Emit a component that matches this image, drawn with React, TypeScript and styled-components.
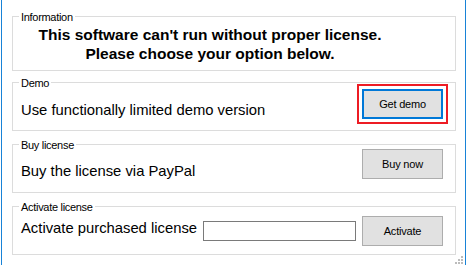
import React from 'react';
import styled, { createGlobalStyle, css } from 'styled-components';

const GlobalStyle = createGlobalStyle`
  html, body {
    margin: 0;
    padding: 0;
    background: #ffffff;
  }
  body {
    font-family: "Liberation Sans", Arial, sans-serif;
    color: #000000;
  }
`;

const Window = styled.div`
  position: relative;
  box-sizing: border-box;
  width: 465px;
  height: 265px;
  margin-left: 1px;
  padding: 16px 9px 0 10px;
  border-left: 1px solid #1883d7;
  border-right: 1px solid #1883d7;
  background: #ffffff;
`;

const Group = styled.div<{ $top?: number; $height?: number }>`
  position: relative;
  box-sizing: border-box;
  height: ${p => p.$height ?? 49}px;
  margin-top: ${p => p.$top ?? 0}px;
  border: 1px solid #dcdcdc;
`;

// caption sits over the group's top border, like a WinForms GroupBox
const Caption = styled.span`
  position: absolute;
  top: -6px;
  left: 6px;
  padding: 0 2px;
  background: #ffffff;
  font-size: 11px;
  line-height: 13px;
  letter-spacing: -0.3px;
  white-space: nowrap;
`;

const Heading = styled.p`
  margin: 0;
  padding: 8px 48px 0 0;
  font-size: 15.5px;
  line-height: 19px;
  font-weight: bold;
  text-align: center;
`;

const Row = styled.div`
  display: flex;
  align-items: flex-start;
  padding: 0 12px 0 8px;
`;

const Message = styled.span<{ $top: number }>`
  flex: 1;
  margin-top: ${p => p.$top}px;
  font-size: 14.8px;
  line-height: 17px;
  white-space: nowrap;
`;

const Controls = styled.div<{ $top: number }>`
  display: flex;
  align-items: center;
  gap: 5px;
  margin-top: ${p => p.$top}px;
`;

const Button = styled.button<{ $focused?: boolean }>`
  box-sizing: border-box;
  width: 81px;
  height: 30px;
  padding: 0;
  border: 1px solid #adadad;
  background: #e1e1e1;
  font-family: "Liberation Sans", Arial, sans-serif;
  font-size: 11px;
  letter-spacing: -0.2px;
  color: #000000;
  ${p =>
    p.$focused &&
    css`
      border: 2px solid #0078d7;
      outline: 2px solid #ed1c24;
      outline-offset: 3px;
    `}
`;

const TextBox = styled.input`
  box-sizing: border-box;
  width: 153px;
  height: 20px;
  margin: 0 1px 0 0;
  padding: 0 3px;
  border: 1px solid #7a7a7a;
  background: #ffffff;
  font-family: "Liberation Sans", Arial, sans-serif;
  font-size: 12px;
`;

const Grip = styled.svg`
  position: absolute;
  right: 1px;
  bottom: 0;
`;

const ResizeGrip = () => (
  <Grip width="9" height="10" viewBox="0 0 9 10">
    {[
      [6, 1],
      [3, 4],
      [6, 4],
      [0, 7],
      [3, 7],
      [6, 7],
    ].map(([x, y]) => (
      <rect key={`${x}-${y}`} x={x} y={y} width="2" height="2" fill="#bcbcbc" />
    ))}
  </Grip>
);

export default function App() {
  return (
    <>
      <GlobalStyle />
      <Window>
        <Group $height={55}>
          <Caption>Information</Caption>
          <Heading>
            This software can't run without proper license.
            <br />
            Please choose your option below.
          </Heading>
        </Group>

        <Group $top={11}>
          <Caption>Demo</Caption>
          <Row>
            <Message $top={19}>Use functionally limited demo version</Message>
            <Controls $top={6}>
              <Button $focused>Get demo</Button>
            </Controls>
          </Row>
        </Group>

        <Group $top={13}>
          <Caption>Buy license</Caption>
          <Row>
            <Message $top={18}>Buy the license via PayPal</Message>
            <Controls $top={4}>
              <Button>Buy now</Button>
            </Controls>
          </Row>
        </Group>

        <Group $top={13}>
          <Caption>Activate license</Caption>
          <Row>
            <Message $top={13}>Activate purchased license</Message>
            <Controls $top={9}>
              <TextBox />
              <Button>Activate</Button>
            </Controls>
          </Row>
        </Group>

        <ResizeGrip />
      </Window>
    </>
  );
}
